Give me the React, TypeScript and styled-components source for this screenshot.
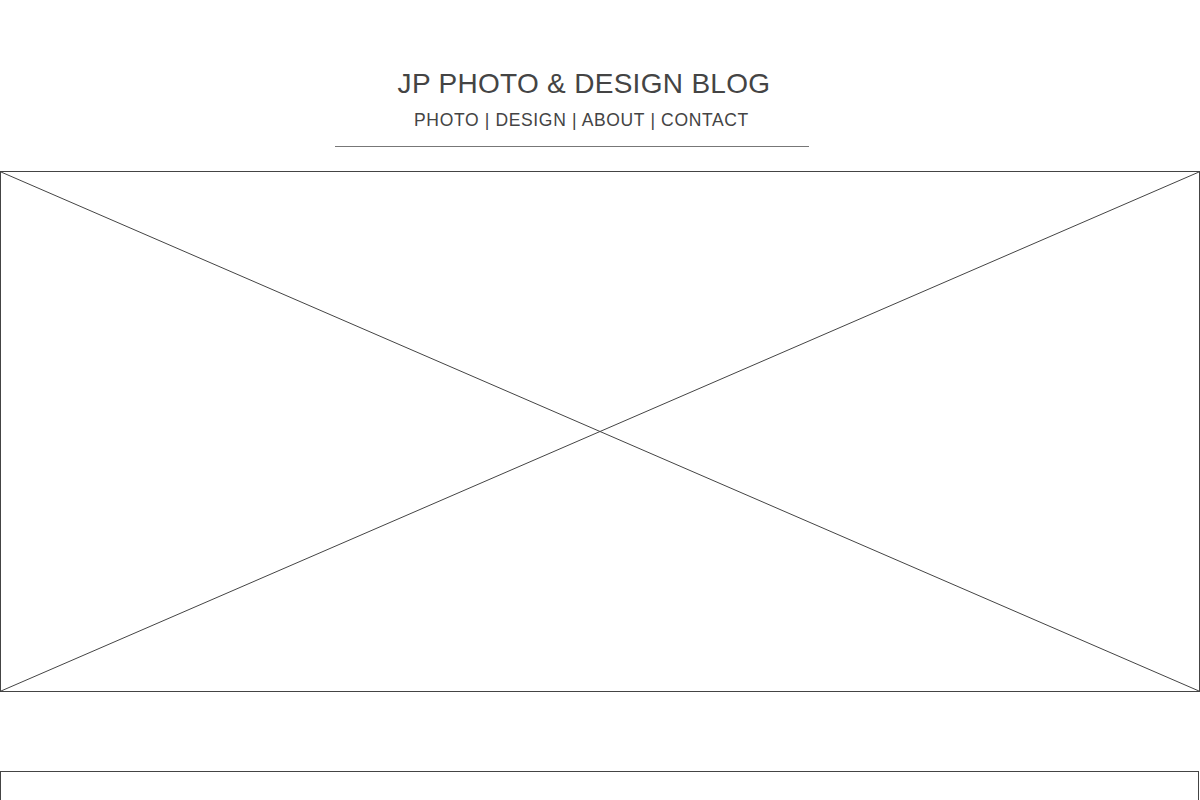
import React from "react";
import styled, { createGlobalStyle } from "styled-components";

const Global = createGlobalStyle`
  html, body { margin: 0; padding: 0; background: #fff; }
  body { font-family: "Liberation Sans", Arial, sans-serif; color: #444; }
`;

const Page = styled.div`
  display: flex;
  flex-direction: column;
  width: 1200px;
`;

const Header = styled.header`
  display: flex;
  flex-direction: column;
  align-items: center;
  padding: 67px 32px 0 0;
`;

const Title = styled.h1`
  margin: 0;
  font-size: 28px;
  font-weight: 400;
  line-height: 34px;
  color: #444;
  letter-spacing: 0.3px;
`;

const Nav = styled.nav`
  margin-top: 8px;
  font-size: 17.5px;
  line-height: 22px;
  color: #444;
  letter-spacing: 0.65px;
  padding-right: 5px;
`;

const Rule = styled.hr`
  width: 474px;
  margin: 15px 0 0 335px;
  align-self: flex-start;
  border: 0;
  border-top: 1px solid #777;
  height: 0;
`;

const Hero = styled.div`
  margin-top: 24px;
  height: 519px;
  border: 1px solid #444;
  position: relative;
`;

const Cross = styled.svg`
  position: absolute;
  inset: 0;
  width: 100%;
  height: 100%;
`;

const Footer = styled.div`
  margin-top: 79px;
  width: 1197px;
  height: 40px;
  border: 1px solid #444;
`;

export default function App() {
  return (
    <Page>
      <Global />
      <Header>
        <Title>JP PHOTO &amp; DESIGN BLOG</Title>
        <Nav>PHOTO | DESIGN | ABOUT | CONTACT</Nav>
      </Header>
      <Rule />
      <Hero>
        <Cross viewBox="0 0 100 100" preserveAspectRatio="none">
          <line x1="0" y1="0" x2="100" y2="100" stroke="#444" strokeWidth="1" vectorEffect="non-scaling-stroke" />
          <line x1="100" y1="0" x2="0" y2="100" stroke="#444" strokeWidth="1" vectorEffect="non-scaling-stroke" />
        </Cross>
      </Hero>
      <Footer />
    </Page>
  );
}
